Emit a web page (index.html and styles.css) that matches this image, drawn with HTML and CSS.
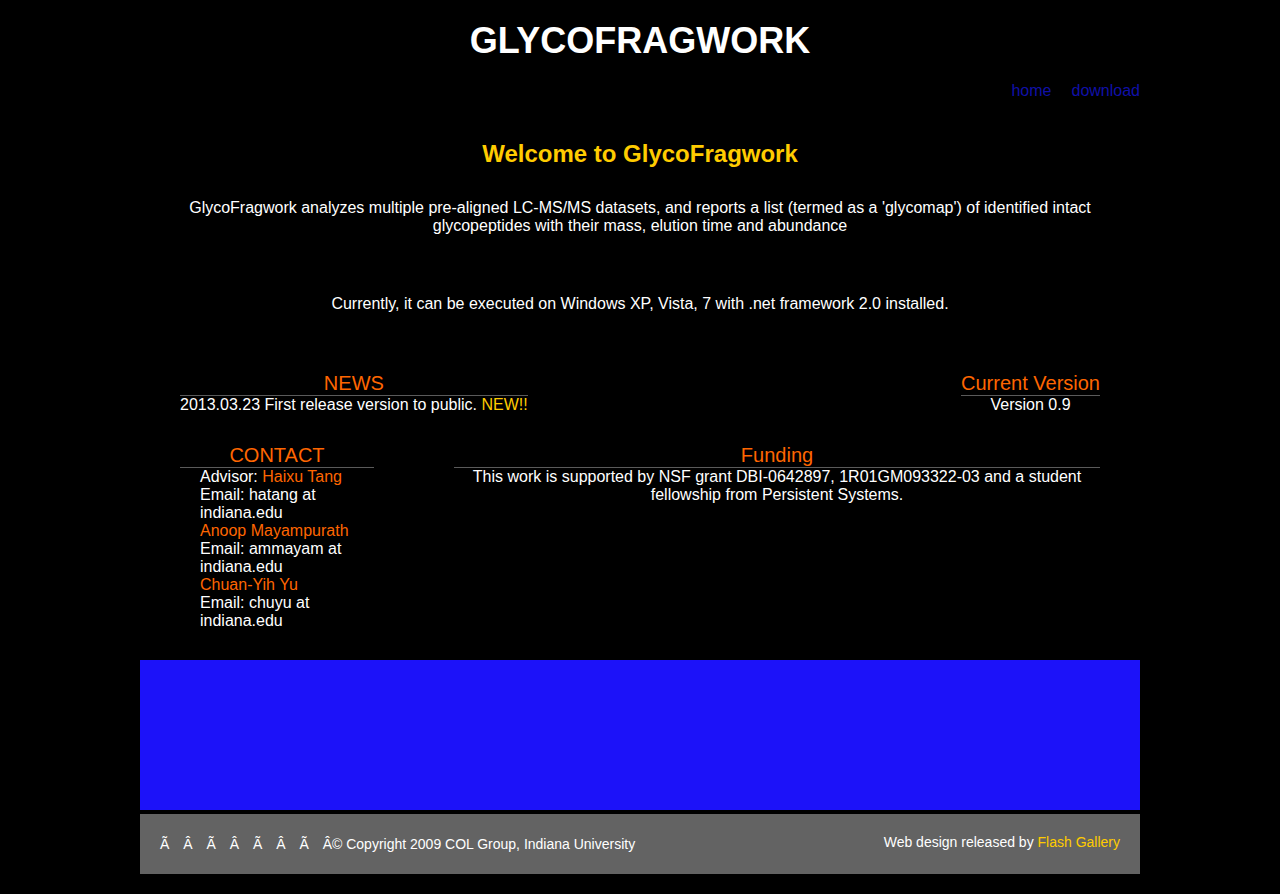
FILE: index.html
```html
<!DOCTYPE html>
<html>
<head>
<meta charset="utf-8">
<title>GlycoFragwork</title>
<link rel="stylesheet" href="styles.css">
</head>
<body>
<div class="page">
  <header class="header">
    <h1 class="logo">GLYCOFRAGWORK</h1>
    <nav class="nav">
      <a href="#" class="nav-link">home</a>
      <a href="#" class="nav-link">download</a>
    </nav>
  </header>

  <main class="content">
    <h2 class="welcome">Welcome to GlycoFragwork</h2>
    <p class="intro">GlycoFragwork analyzes multiple pre-aligned LC-MS/MS datasets, and reports a list (termed as a 'glycomap') of identified intact glycopeptides with their mass, elution time and abundance</p>
    <p class="platform">Currently, it can be executed on Windows XP, Vista, 7 with .net framework 2.0 installed.</p>

    <div class="row row-news">
      <section class="box box-news">
        <h3 class="box-title">NEWS</h3>
        <div class="box-body">2013.03.23 First release version to public. <span class="new">NEW!!</span></div>
      </section>
      <section class="box box-version">
        <h3 class="box-title">Current Version</h3>
        <div class="box-body">Version 0.9</div>
      </section>
    </div>

    <div class="row row-contact">
      <section class="box box-contact">
        <h3 class="box-title">CONTACT</h3>
        <div class="box-body contact-body">
          Advisor: <a href="#" class="person">Haixu Tang</a><br>
          Email: hatang at indiana.edu<br>
          <a href="#" class="person">Anoop Mayampurath</a><br>
          Email: ammayam at indiana.edu<br>
          <a href="#" class="person">Chuan-Yih Yu</a><br>
          Email: chuyu at indiana.edu
        </div>
      </section>
      <section class="box box-funding">
        <h3 class="box-title">Funding</h3>
        <div class="box-body">This work is supported by NSF grant DBI-0642897, 1R01GM093322-03 and a student fellowship from Persistent Systems.</div>
      </section>
    </div>
  </main>

  <div class="banner"></div>

  <footer class="footer">
    <div class="copyright"><span class="garble">ÃÂÃÂÃÂÃ</span>Â© Copyright 2009 COL Group, Indiana University</div>
    <div class="credit">Web design released by <a href="#" class="credit-link">Flash Gallery</a></div>
  </footer>
</div>
</body>
</html>
```

FILE: styles.css
```css
html, body {
  margin: 0;
  padding: 0;
  background: #000;
}

body {
  font-family: "Liberation Sans", Arial, sans-serif;
  color: #fff;
  font-size: 16px;
}

.page {
  width: 1000px;
  margin: 0 auto;
  padding-bottom: 20px;
}

.header {
  padding-top: 20px;
}

.logo {
  margin: 0;
  font-size: 36px;
  line-height: 42px;
  font-weight: bold;
  text-align: center;
  color: #fff;
}

.nav {
  margin-top: 19px;
  display: flex;
  justify-content: flex-end;
  gap: 20px;
  line-height: 20px;
}

.nav-link {
  color: #1010a8;
  text-decoration: none;
  font-size: 16px;
}

.content {
  padding: 0 40px;
}

.welcome {
  margin: 39px 0 0;
  font-size: 24px;
  line-height: 28px;
  font-weight: bold;
  color: #ffcc00;
  text-align: center;
}

.intro {
  margin: 31px 0 0;
  line-height: 18px;
  text-align: center;
}

.platform {
  margin: 60px 0 0;
  line-height: 18px;
  text-align: center;
}

.row {
  display: flex;
}

.row-news {
  justify-content: space-between;
  margin-top: 58px;
}

.row-contact {
  margin-top: 29px;
}

.box-title {
  margin: 0;
  font-size: 20px;
  line-height: 24px;
  font-weight: normal;
  color: #ff6600;
  text-align: center;
  border-bottom: 1px solid #5a5a5a;
}

.box-body {
  line-height: 18px;
  text-align: center;
}

.box-news .box-body {
  text-align: left;
}

.new {
  color: #ffcc00;
}

.box-contact {
  width: 194px;
  flex: none;
}

.contact-body {
  text-align: left;
  padding-left: 20px;
}

.person {
  color: #ff6600;
  text-decoration: none;
}

.box-funding {
  flex: 1;
  margin-left: 80px;
}

.banner {
  margin-top: 30px;
  height: 150px;
  background: #1c12f9;
}

.footer {
  margin-top: 4px;
  height: 60px;
  background: #636363;
  display: flex;
  justify-content: space-between;
  align-items: center;
  padding: 0 20px;
  font-size: 14px;
  line-height: 16px;
}

.garble {
  letter-spacing: 13.9px;
}

.credit {
  padding-bottom: 4px;
}

.credit-link {
  color: #ffcc00;
  text-decoration: none;
}
```
